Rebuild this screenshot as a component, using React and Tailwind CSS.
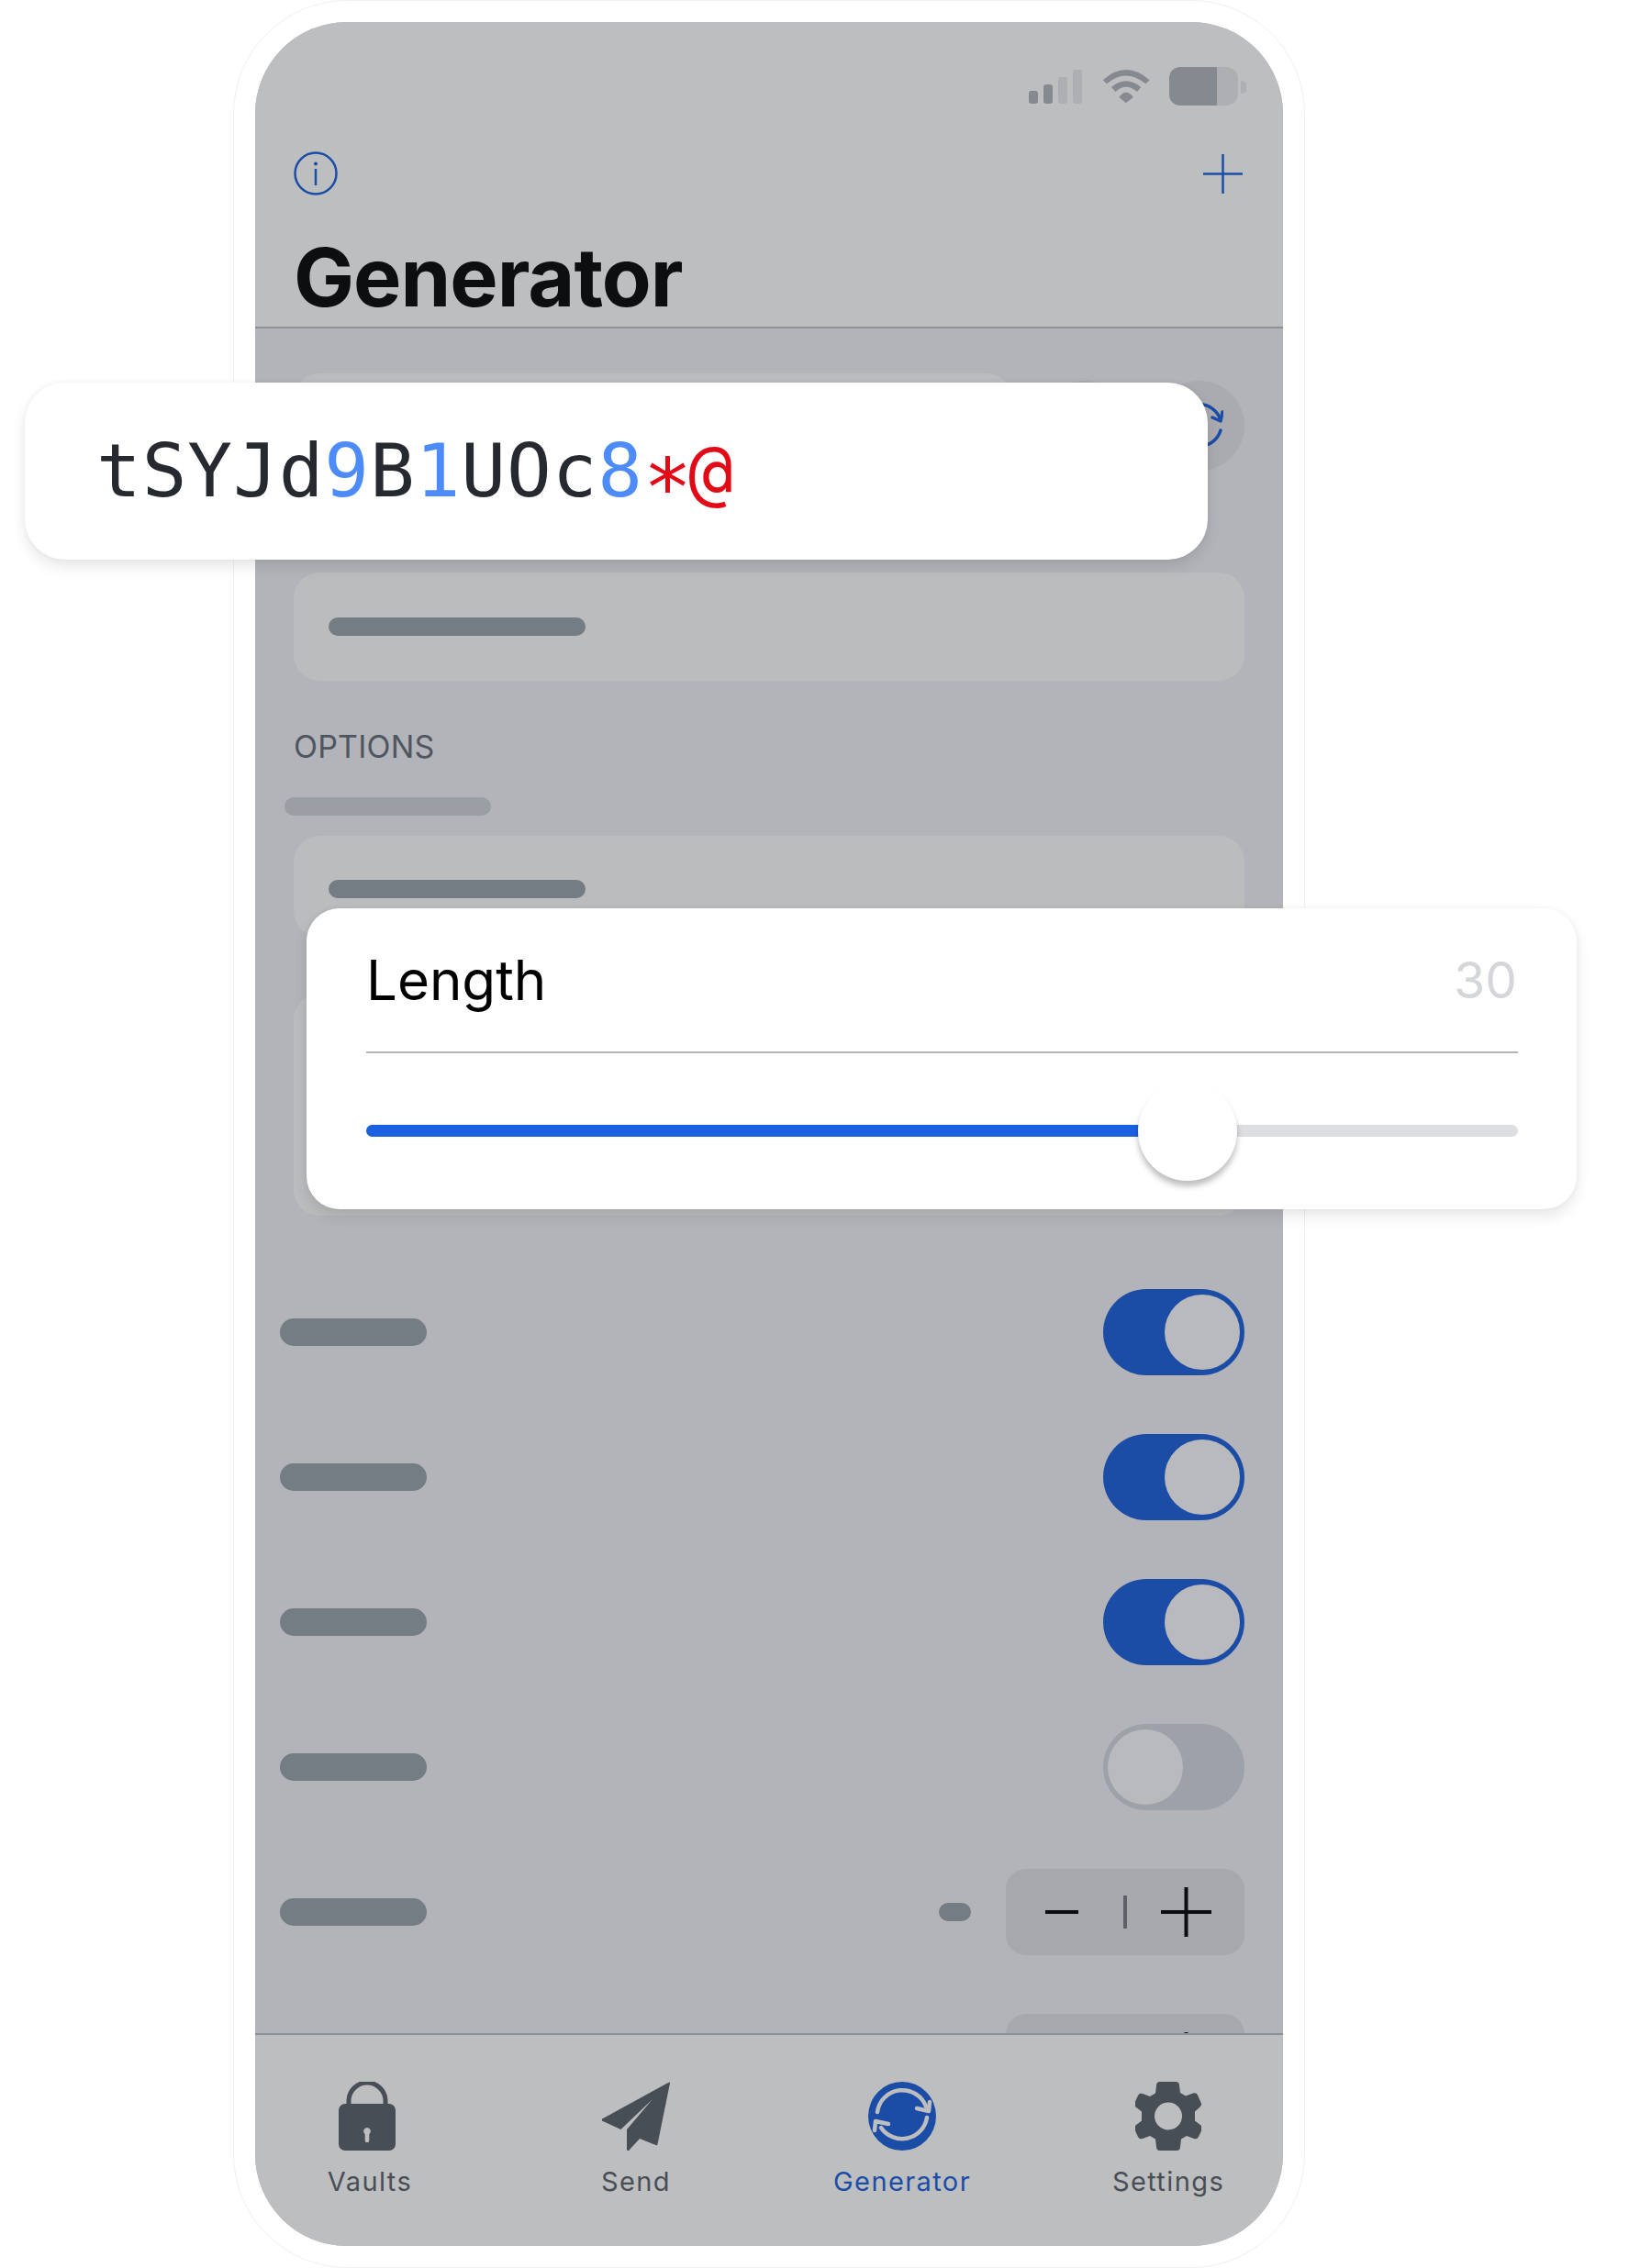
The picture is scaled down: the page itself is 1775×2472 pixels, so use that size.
const ink = "text-[#484e56]";

function Bar({ className }) {
  return <div className={`rounded-full ${className}`} />;
}

function Toggle({ on }) {
  return (
    <div className={`flex h-[94px] w-[154px] items-center rounded-full px-[5px] ${on ? "justify-end bg-[#1c4da6]" : "justify-start bg-[#9da1a9]"}`}>
      <div className="h-[82px] w-[82px] rounded-full bg-[#b9babd]" />
    </div>
  );
}

function Row({ children }) {
  return <div className="flex h-[94px] items-center justify-between">
    <Bar className="h-[30px] w-[160px] bg-[#747c84]" />
    {children}
  </div>;
}

function StepperBox() {
  return (
    <div className="flex h-[94px] w-[260px] shrink-0 items-center rounded-[22px] bg-[#a7a8ac] pl-[43px]">
      <div className="h-[4px] w-[36px] bg-[#0c0d10]" />
      <div className="ml-[49px] h-[36px] w-[4px] bg-[#5e6069]" />
      <svg className="ml-[37px]" width="55" height="54" viewBox="0 0 55 54"><path d="M0 27h55M27.500 0v54" stroke="#0c0d10" strokeWidth="4" /></svg>
    </div>
  );
}

function Stepper() {
  return (
    <div className="flex items-center gap-[38px]">
      <Bar className="h-[20px] w-[35px] bg-[#747c84]" />
      <StepperBox />
    </div>
  );
}

function Tab({ label, icon, color, width }) {
  return (
    <div className={`flex flex-col items-center ${width}`}>
      <div className="flex h-[75px] items-center justify-center">{icon}</div>
      <div className={`mt-[16px] text-[29px] leading-[36px] tracking-[1.4px] ${color}`} style={{ fontFamily: "Inter, sans-serif" }}>{label}</div>
    </div>
  );
}

const Lock = (
  <svg className="mr-[6px]" width="62" height="75" viewBox="0 0 62 75">
    <path d="M11 27v-6a20 20 0 0 1 40 0v6" fill="none" stroke="#484e56" strokeWidth="5" />
    <path fillRule="evenodd" fill="#484e56" d="M7 24h48a7 7 0 0 1 7 7v37a7 7 0 0 1-7 7H7a7 7 0 0 1-7-7V31a7 7 0 0 1 7-7zM31 50a4 4 0 0 0-2.300 7.200V64a2.300 2.300 0 0 0 4.600 0v-6.800A4 4 0 0 0 31 50z" />
  </svg>
);

const Plane = (
  <svg width="74" height="75" viewBox="0 0 74 75">
    <path fill="#484e56" d="M73 0.500a1 1 0 0 1 1 1L60.500 68a1.500 1.500 0 0 1-2 1L41 62 30 74a1.500 1.500 0 0 1-3-1V52L55 19 20.500 52 1 43a1.500 1.500 0 0 1 0-3z" />
  </svg>
);

const Sync = (
  <svg width="74" height="75" viewBox="0 0 74 75">
    <ellipse cx="37" cy="37.500" rx="37" ry="37.500" fill="#1c4da6" />
    <g fill="none" stroke="#bdbec0" strokeWidth="4.500" strokeLinecap="round" strokeLinejoin="round">
      <path d="M10 33A27.500 27.500 0 0 1 63 27" />
      <path d="M53 29l13 3 1-10" />
      <path d="M64 39A27.500 27.500 0 0 1 14 50" />
      <path d="M22 46l-14-3-1 10" />
    </g>
  </svg>
);

const Gear = (
  <svg width="72" height="75" viewBox="0 0 72 75">
    <path fillRule="evenodd" fill="#484e56" d="M28 0h16a4 4 0 0 1 4 4l1 8 6 3.500 8-3a4 4 0 0 1 5 2l3.500 8a4 4 0 0 1-1 5L65 32.500v10l6.500 5a4 4 0 0 1 1 5L69 60a4 4 0 0 1-5 2l-8-3-6 3.500-1 8.500a4 4 0 0 1-4 4H27a4 4 0 0 1-4-4l-1-8.500-6-3.500-8 3a4 4 0 0 1-5-2L-.500 52.500a4 4 0 0 1 1-5l6.500-5v-10l-6.500-5a4 4 0 0 1-1-5L3 15a4 4 0 0 1 5-2l8 3 6-3.500 1-8a4 4 0 0 1 5-4.500zM36 22.500a15 15 0 1 0 .010 30 15 15 0 0 0-.010-30z" />
  </svg>
);

const mono = { fontFamily: '"DejaVu Sans Mono", monospace' };
const sans = { fontFamily: "Inter, sans-serif" };

export default function App() {
  return (
    <div className="relative h-[2472px] w-[1775px] overflow-hidden bg-white">
      <div className="ml-[254px] h-[2472px] w-[1168px] rounded-[124px] border border-[#f0f0f0] p-[23px]">
        <div className="flex h-[2424px] w-[1120px] flex-col overflow-hidden rounded-[100px] bg-[#b3b4b9]">
          <header className="h-[334px] shrink-0 border-b-2 border-[#8f9197] bg-[#bdbec0] pl-[42px] pr-[44px]">
            <div className="flex h-[93px] items-start justify-end pt-[49px]">
              <svg width="237" height="44" viewBox="0 0 237 44" className="mr-[-4px] shrink-0">
                <rect x="0" y="26" width="10" height="14" rx="3" fill="#858a91" />
                <rect x="16" y="19" width="10" height="21" rx="3" fill="#858a91" />
                <rect x="32" y="11" width="10" height="29" rx="3" fill="#adafb3" />
                <rect x="48" y="3" width="10" height="37" rx="3" fill="#adafb3" />
                <path d="M80.700 14.300Q105.700 -8.300 131.700 14.300L127.300 18.300Q105.700 .7 85 18.300z" fill="#858a91" />
                <path d="M90 22Q105.700 8.600 122.300 22L118 27Q105.700 16.400 94.500 27z" fill="#858a91" />
                <path d="M98.300 33Q105.700 22.400 114 33L105.700 39.300z" fill="#858a91" />
                <path d="M205 0h10a13 13 0 0 1 13 13v16a13 13 0 0 1-13 13h-10z" fill="#adafb3" />
                <path d="M165 0h40v42h-40a12 12 0 0 1-12-12V12a12 12 0 0 1 12-12z" fill="#858a91" />
                <path d="M231 15a8 7 0 0 1 0 14z" fill="#adafb3" />
              </svg>
            </div>
            <div className="mt-[48px] flex h-[48px] items-center justify-between">
              <svg width="48" height="48" viewBox="0 0 48 48">
                <circle cx="24" cy="24" r="22.500" fill="none" stroke="#1c4da6" strokeWidth="2.500" />
                <circle cx="24" cy="13.500" r="2" fill="#1c4da6" />
                <path d="M24 19v18" stroke="#1c4da6" strokeWidth="2.500" />
              </svg>
              <svg width="43" height="43" viewBox="0 0 43 43">
                <path d="M0 21.500h43M21.500 0v43" stroke="#1c4da6" strokeWidth="2.500" />
              </svg>
            </div>
            <h1 className="mt-[36px] text-[88px] font-bold leading-[106px] tracking-[-1px] text-[#0d0e10]" style={sans}>Generator</h1>
          </header>

          <main className="min-h-0 flex-1 overflow-hidden pl-[27px] pr-[42px]">
            <div className="ml-[15px] mt-[49px] flex h-[108px] items-start">
              <div className="h-[108px] w-[783px] rounded-[28px] bg-[#bbbcbe]" />
              <div className="ml-[29px] mt-[8px] h-[98px] w-[98px] shrink-0 rounded-full bg-[#aaabb0]" />
              <div className="ml-auto mt-[8px] flex h-[98px] w-[98px] shrink-0 items-center justify-center rounded-full bg-[#aaabb0]">
                <svg width="52" height="52" viewBox="0 0 52 52">
                  <g fill="none" stroke="#1c4da6" strokeWidth="3.500" strokeLinecap="round" strokeLinejoin="round">
                    <path d="M3 20A24 24 0 0 1 49 20" />
                    <path d="M40 17l9 4 2-10" />
                    <path d="M49 31A24 24 0 0 1 5 36" />
                  </g>
                </svg>
              </div>
            </div>
            <div className="ml-[15px] mt-[109px] h-[118px] rounded-[28px] bg-[#bbbcbe] pl-[38px] pt-[49px]">
              <Bar className="h-[20px] w-[280px] bg-[#747c84]" />
            </div>
            <div className="ml-[15px] mt-[47px] text-[34px] leading-[50px] tracking-[0.2px] text-[#4f5660]" style={sans}>OPTIONS</div>
            <Bar className="ml-[5px] mt-[30px] h-[20px] w-[225px] bg-[#9a9ea5]" />
            <div className="ml-[15px] mt-[22px] h-[110px] rounded-[28px] bg-[#bbbcbe] pl-[38px] pt-[48px]">
              <Bar className="h-[20px] w-[280px] bg-[#747c84]" />
            </div>
            <div className="ml-[15px] mt-[62px] h-[242px] rounded-[28px] bg-[#bbbcbe]" />
            <div className="mt-[80px] flex flex-col gap-[64px]">
              <Row><Toggle on /></Row>
              <Row><Toggle on /></Row>
              <Row><Toggle on /></Row>
              <Row><Toggle /></Row>
              <Row><Stepper /></Row>
              <div className="flex justify-end">
                <StepperBox />
              </div>
            </div>
          </main>

          <footer className="flex h-[232px] shrink-0 items-start border-t-2 border-[#8a9099] bg-[#bdbec0] pt-[51px]">
            <Tab width="ml-[37px] w-[176px]" label="Vaults" icon={Lock} color={ink} />
            <Tab width="ml-[114px] w-[176px]" label="Send" icon={Plane} color={ink} />
            <Tab width="ml-[114px] w-[176px]" label="Generator" icon={Sync} color="text-[#1c4da6]" />
            <Tab width="ml-[114px] w-[176px]" label="Settings" icon={Gear} color={ink} />
          </footer>
        </div>
      </div>

      <div className="absolute left-[27px] top-[417px] flex h-[193px] w-[1289px] items-center rounded-[44px] bg-white pl-[78px] shadow-[0_8px_16px_rgba(0,0,0,0.09),0_0_6px_rgba(0,0,0,0.05)]">
        <div className="h-[81px] whitespace-nowrap text-[81px] leading-none tracking-[0.9px] text-[#262a30]" style={mono}>
          tSYJd<span className="text-[#4d8cf8]">9</span>B<span className="text-[#4d8cf8]">1</span>UOc<span className="text-[#4d8cf8]">8</span><span className="inline-block w-[49px] align-[-21px] text-[88px] leading-none tracking-[-5px] text-[#e30a17]">*</span><span className="text-[#e30a17]">@</span>
        </div>
      </div>

      <div className="absolute left-[334px] top-[990px] h-[328px] w-[1384px] rounded-[36px] bg-white pl-[65px] pr-[64px] shadow-[0_8px_16px_rgba(0,0,0,0.09),0_0_6px_rgba(0,0,0,0.05)]">
        <div className="flex h-[158px] items-center justify-between border-b-2 border-[#b5b5b5]" style={sans}>
          <span className="text-[60px] leading-none text-black">Length</span>
          <span className="pr-[1px] text-[55px] leading-none text-[#d5d6da]">30</span>
        </div>
        <div className="relative mt-[78px] h-[13px] rounded-full bg-[#dddee2]">
          <div className="h-[13px] w-[880px] rounded-full bg-[#1a60e0]" />
          <div className="absolute left-[841px] top-[-47px] h-[108px] w-[108px] rounded-full bg-white shadow-[0_6px_6px_rgba(0,0,0,0.25)]" />
        </div>
      </div>
    </div>
  );
}
